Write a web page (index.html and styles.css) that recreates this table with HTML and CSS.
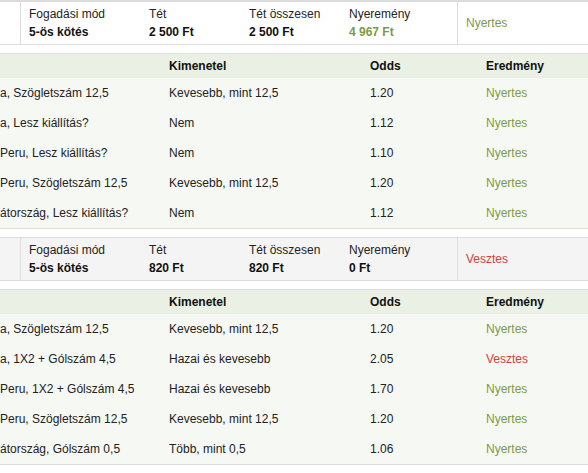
FILE: index.html
```html
<!DOCTYPE html>
<html lang="hu">
<head>
    <meta charset="UTF-8">
    <meta name="viewport" content="width=device-width, initial-scale=1.0">
    <title>Fogadási előzmények</title>
    <link rel="stylesheet" href="styles.css">
</head>
<body>
    <div class="bets">
        <div class="bet">
            <div class="summary summary-open">
                <div class="lead"></div>
                <div class="info">
                    <div class="cell c-type"><span class="label">Fogadási mód</span><strong>5-ös kötés</strong></div>
                    <div class="cell c-stake"><span class="label">Tét</span><strong>2 500 Ft</strong></div>
                    <div class="cell c-total"><span class="label">Tét összesen</span><strong>2 500 Ft</strong></div>
                    <div class="cell c-win"><span class="label">Nyeremény</span><strong class="won">4 967 Ft</strong></div>
                </div>
                <div class="status won">Nyertes</div>
            </div>
            <div class="legs">
                <div class="row head">
                    <div class="col event"></div>
                    <div class="col outcome">Kimenetel</div>
                    <div class="col odds">Odds</div>
                    <div class="col result">Eredmény</div>
                </div>
                <div class="row">
                    <div class="col event">a, Szögletszám 12,5</div>
                    <div class="col outcome">Kevesebb, mint 12,5</div>
                    <div class="col odds">1.20</div>
                    <div class="col result won">Nyertes</div>
                </div>
                <div class="row">
                    <div class="col event">a, Lesz kiállítás?</div>
                    <div class="col outcome">Nem</div>
                    <div class="col odds">1.12</div>
                    <div class="col result won">Nyertes</div>
                </div>
                <div class="row">
                    <div class="col event">Peru, Lesz kiállítás?</div>
                    <div class="col outcome">Nem</div>
                    <div class="col odds">1.10</div>
                    <div class="col result won">Nyertes</div>
                </div>
                <div class="row">
                    <div class="col event">Peru, Szögletszám 12,5</div>
                    <div class="col outcome">Kevesebb, mint 12,5</div>
                    <div class="col odds">1.20</div>
                    <div class="col result won">Nyertes</div>
                </div>
                <div class="row">
                    <div class="col event">átország, Lesz kiállítás?</div>
                    <div class="col outcome">Nem</div>
                    <div class="col odds">1.12</div>
                    <div class="col result won">Nyertes</div>
                </div>
            </div>
        </div>

        <div class="bet">
            <div class="summary">
                <div class="lead"></div>
                <div class="info">
                    <div class="cell c-type"><span class="label">Fogadási mód</span><strong>5-ös kötés</strong></div>
                    <div class="cell c-stake"><span class="label">Tét</span><strong>820 Ft</strong></div>
                    <div class="cell c-total"><span class="label">Tét összesen</span><strong>820 Ft</strong></div>
                    <div class="cell c-win"><span class="label">Nyeremény</span><strong>0 Ft</strong></div>
                </div>
                <div class="status lost">Vesztes</div>
            </div>
            <div class="legs">
                <div class="row head">
                    <div class="col event"></div>
                    <div class="col outcome">Kimenetel</div>
                    <div class="col odds">Odds</div>
                    <div class="col result">Eredmény</div>
                </div>
                <div class="row">
                    <div class="col event">a, Szögletszám 12,5</div>
                    <div class="col outcome">Kevesebb, mint 12,5</div>
                    <div class="col odds">1.20</div>
                    <div class="col result won">Nyertes</div>
                </div>
                <div class="row">
                    <div class="col event">a, 1X2 + Gólszám 4,5</div>
                    <div class="col outcome">Hazai és kevesebb</div>
                    <div class="col odds">2.05</div>
                    <div class="col result lost">Vesztes</div>
                </div>
                <div class="row">
                    <div class="col event">Peru, 1X2 + Gólszám 4,5</div>
                    <div class="col outcome">Hazai és kevesebb</div>
                    <div class="col odds">1.70</div>
                    <div class="col result won">Nyertes</div>
                </div>
                <div class="row">
                    <div class="col event">Peru, Szögletszám 12,5</div>
                    <div class="col outcome">Kevesebb, mint 12,5</div>
                    <div class="col odds">1.20</div>
                    <div class="col result won">Nyertes</div>
                </div>
                <div class="row">
                    <div class="col event">átország, Gólszám 0,5</div>
                    <div class="col outcome">Több, mint 0,5</div>
                    <div class="col odds">1.06</div>
                    <div class="col result won">Nyertes</div>
                </div>
            </div>
        </div>
    </div>
</body>
</html>
```

FILE: styles.css
```css
* {
    margin: 0;
    padding: 0;
    box-sizing: border-box;
}
body {
    background: #fff;
    font-family: "Liberation Sans", Arial, sans-serif;
    font-size: 12px;
    color: #222;
    overflow: hidden;
}
.bets {
    border-top: 1px solid #dcdcdc;
}
.bet {
    margin-bottom: 8px;
}
.summary {
    display: flex;
    background: #f4f4f4;
    border-top: 1px solid #dcdcdc;
    border-bottom: 1px solid #dcdcdc;
    height: 44px;
}
.summary-open {
    background: #fff;
}
.lead {
    width: 21px;
    border-right: 1px solid #dcdcdc;
    flex-shrink: 0;
}
.info {
    display: flex;
    padding: 3px 0 3px 8px;
    line-height: 18px;
}
.cell {
    display: flex;
    flex-direction: column;
    flex-shrink: 0;
}
.cell strong {
    color: #111;
}
.c-type { width: 120px; }
.c-stake { width: 100px; }
.c-total { width: 100px; }
.c-win { width: 108px; }
.status {
    flex: 1;
    border-left: 1px solid #dcdcdc;
    padding-left: 8px;
    display: flex;
    align-items: center;
    line-height: 18px;
}
.won,
.cell strong.won {
    color: #7b9a48;
}
.lost {
    color: #d6403a;
}
.legs {
    margin-top: 8px;
    border-top: 1px solid #dcdcdc;
    border-bottom: 1px solid #dcdcdc;
    background: #f6f8f3;
}
.row {
    display: flex;
    height: 30px;
    align-items: center;
    white-space: nowrap;
}
.row.head {
    height: 24px;
    background: #ebf0e5;
    font-weight: bold;
    color: #111;
}
.col.event { width: 169px; }
.col.outcome { width: 201px; }
.col.odds { width: 116px; }
.col.result { flex: 1; }
```
